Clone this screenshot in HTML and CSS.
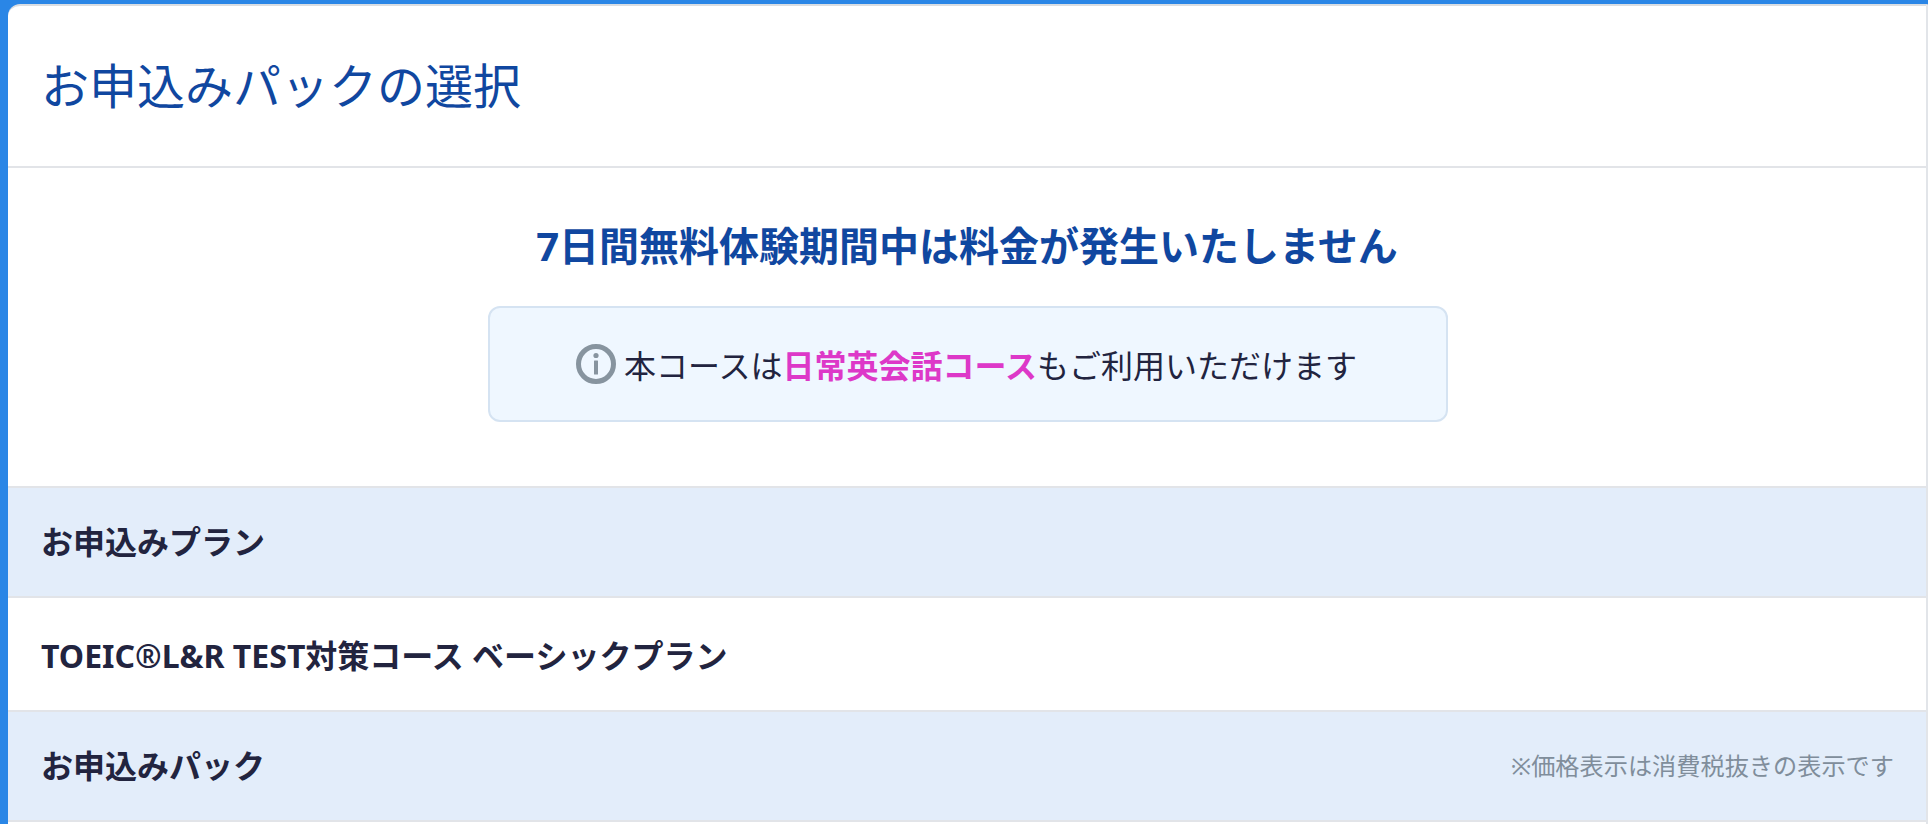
FILE: index.html
```html
<!DOCTYPE html>
<html lang="ja">
<head>
<meta charset="utf-8">
<title>お申込みパックの選択</title>
<link rel="stylesheet" href="styles.css">
</head>
<body>
<main class="card">
  <header class="card-head">
    <h1 class="card-title">お申込みパックの選択</h1>
  </header>
  <section class="notice">
    <h2 class="notice-title">7日間無料体験期間中は料金が発生いたしません</h2>
    <div class="info">
      <svg class="info-icon" viewBox="0 0 40 40" aria-hidden="true">
        <circle class="info-ring" cx="20" cy="20" r="17.5"/>
        <circle class="info-dot" cx="20" cy="11.5" r="2.6"/>
        <rect class="info-dot" x="18" y="16.5" width="4" height="14" rx="0.5"/>
      </svg>
      <p class="info-text">本コースは<strong class="accent">日常英会話コース</strong>もご利用いただけます</p>
    </div>
  </section>
  <div class="band">
    <h3 class="band-title">お申込みプラン</h3>
  </div>
  <div class="row">
    <p class="row-text">TOEIC®L&amp;R TEST対策コース ベーシックプラン</p>
  </div>
  <div class="band">
    <h3 class="band-title">お申込みパック</h3>
    <span class="band-note">※価格表示は消費税抜きの表示です</span>
  </div>
</main>
</body>
</html>
```

FILE: styles.css
```css
* { box-sizing: border-box; }
html, body { margin: 0; height: 100%; }
body {
  background: #2a86e6;
  padding: 4px 0 0 8px;
  overflow: hidden;
  font-family: "Noto Sans", "Noto Sans CJK JP", sans-serif;
  color: #22243f;
}
.card {
  background: #fff;
  border-top: 2px solid #d9dde2;
  border-right: 2px solid #e2e5e9;
  border-top-left-radius: 12px;
  min-height: 100%;
}
.card-head {
  height: 162px;
  display: flex;
  align-items: center;
  padding: 0 33px;
  border-bottom: 2px solid #e2e4e8;
}
.card-title {
  margin: 0;
  font-size: 48px;
  font-weight: 400;
  color: #1047a0;
  line-height: 1.4;
}
.notice {
  height: 318px;
  display: flex;
  flex-direction: column;
  align-items: center;
  padding-top: 48px;
}
.notice-title {
  margin: 0;
  font-size: 40px;
  font-weight: 700;
  line-height: 60px;
  color: #1047a0;
}
.info {
  margin: 30px 0 0 2px;
  width: 960px;
  height: 116px;
  display: flex;
  align-items: center;
  justify-content: center;
  gap: 8px;
  padding-right: 3px;
  background: #eff7ff;
  border: 2px solid #d5e3f2;
  border-radius: 12px;
}
.info-icon { width: 40px; height: 40px; flex: none; }
.info-ring { fill: none; stroke: #87949f; stroke-width: 5; }
.info-dot { fill: #87949f; }
.info-text { margin: 0; padding-top: 3px; font-size: 32px; line-height: 48px; }
.accent { color: #dd38c8; font-weight: 700; }
.band {
  height: 112px;
  display: flex;
  align-items: center;
  justify-content: space-between;
  padding: 0 32px 4px 33px;
  background: #e3edfa;
  border-top: 2px solid #e2e4e8;
  border-bottom: 2px solid #e2e4e8;
}
.band-title { margin: 0; font-size: 32px; font-weight: 700; }
.band-note { font-size: 24.2px; color: #808d9b; }
.row {
  height: 112px;
  display: flex;
  align-items: center;
  padding: 0 33px;
}
.row-text { margin: 0; font-size: 32px; font-weight: 700; }
```
